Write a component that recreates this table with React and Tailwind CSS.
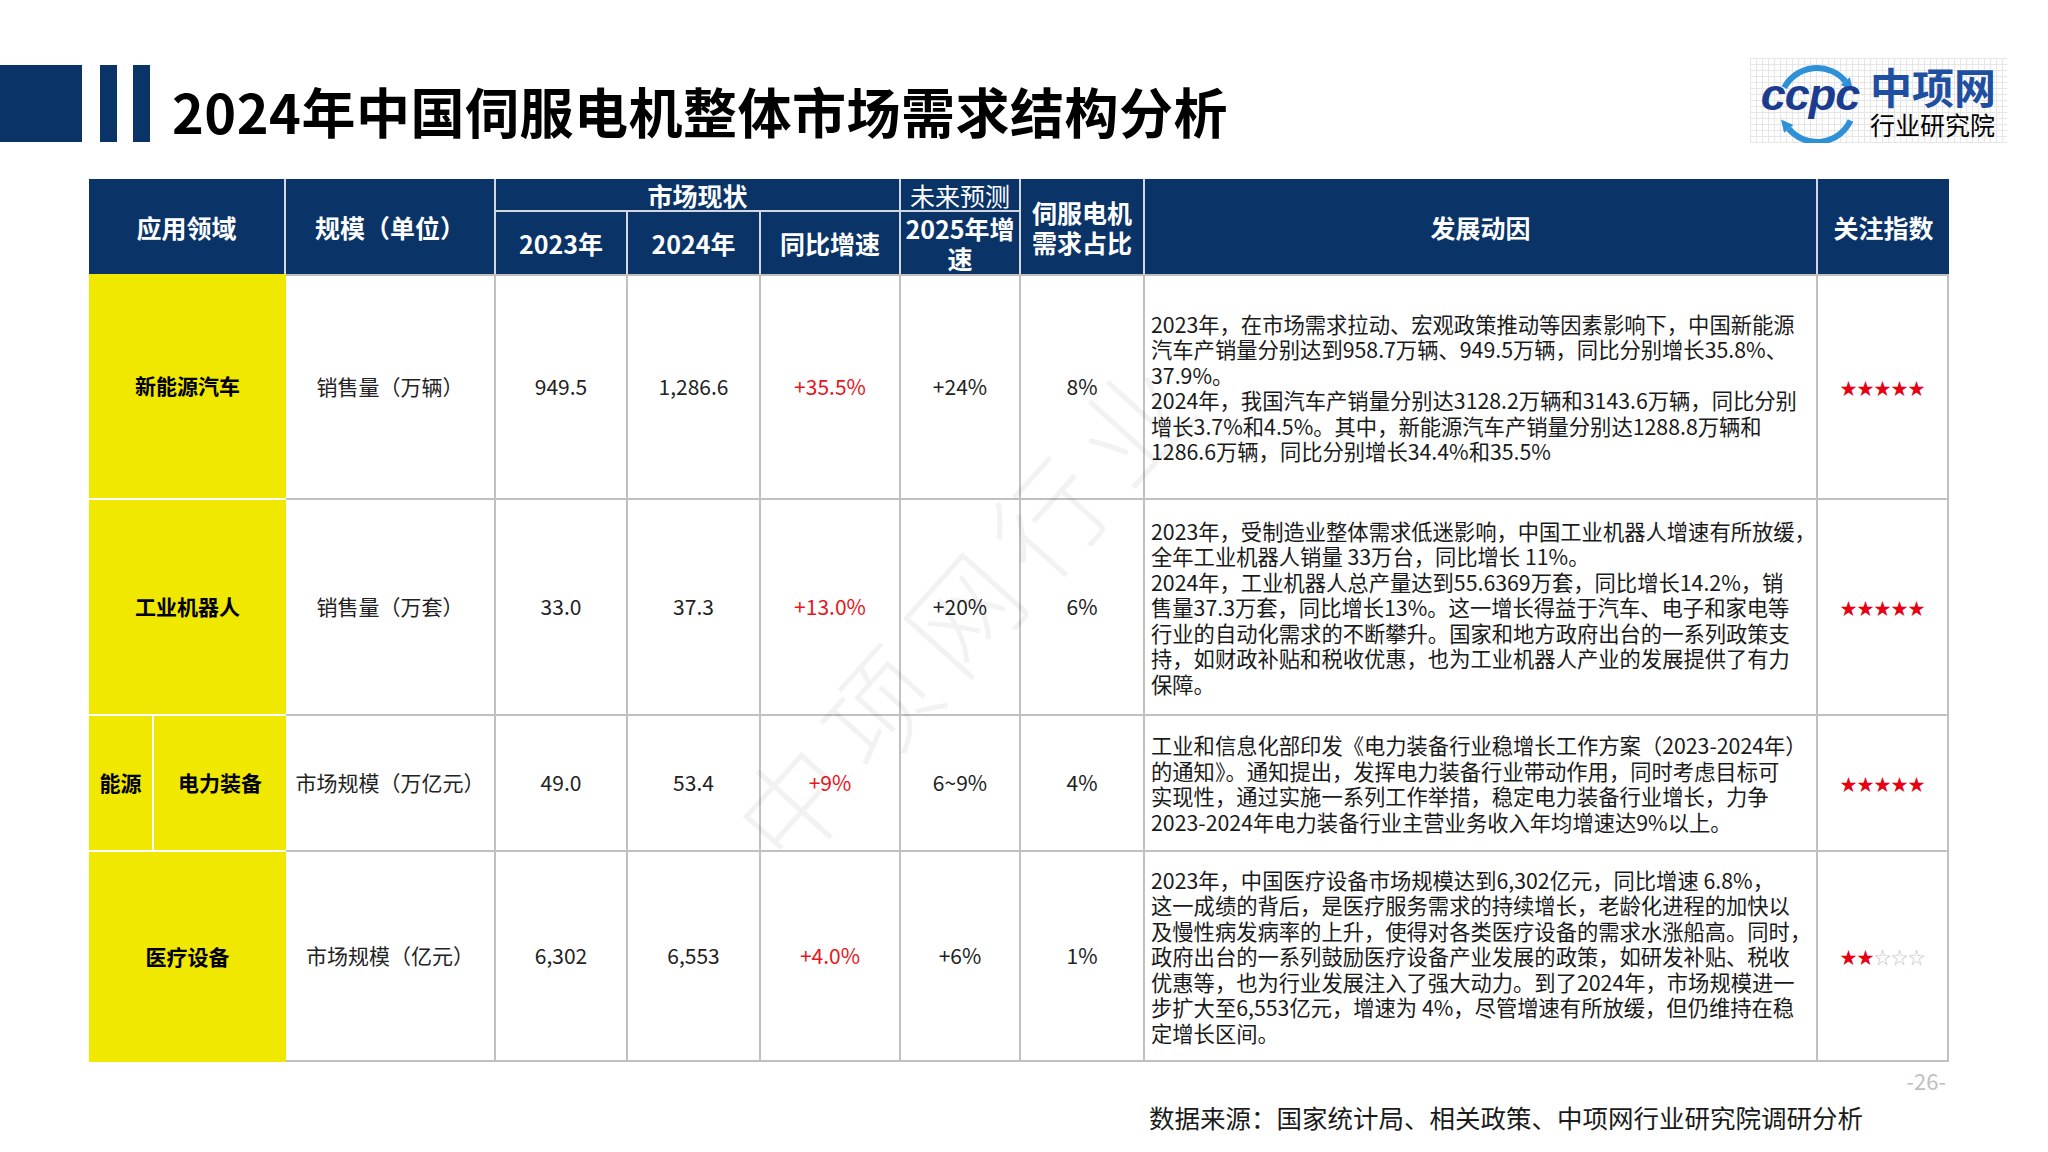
import React from 'react';

function Logo() {
  return (
    <div className="relative ml-auto mr-[41px] mt-[58px] flex h-[85px] w-[257px] bg-[image:linear-gradient(to_right,#e6e6e6_1px,transparent_1px),linear-gradient(to_bottom,#e6e6e6_1px,transparent_1px)] bg-[size:6px_6px]">
      <div className="relative flex h-full w-[120px] items-center justify-center pb-[12px]">
        <svg className="absolute left-0 top-0" width="120" height="85" viewBox="0 0 120 85">
          <path d="M 34.3 29.6 A 37 37 0 0 1 95.3 23.2" fill="none" stroke="#2e90d6" strokeWidth="6" />
          <polygon points="103,32.4 99.9,19.3 90.7,27.1" fill="#2e90d6" />
          <path d="M 100.5 62.6 A 37 37 0 0 1 38.7 70.8" fill="none" stroke="#2e90d6" strokeWidth="6" />
          <polygon points="31,61.6 34.1,74.7 43.3,66.9" fill="#2e90d6" />
        </svg>
        <span className="relative font-['Liberation_Sans',sans-serif] text-[45px] font-bold italic leading-none tracking-[-1px] text-[#1c3d8f]">
          ccpc
        </span>
      </div>
      <div className="flex flex-col pt-[7px]">
        <span className="text-[42px] font-bold leading-[42px] text-[#1f4fa0]">中项网</span>
        <span className="mt-[5px] text-[25px] leading-[25px] text-black">行业研究院</span>
      </div>
    </div>
  );
}

function H({ children, className = '' }) {
  return (
    <div
      className={`flex items-center justify-center text-center bg-[#0a3468] text-white font-bold text-[25px] leading-[30px] border-[#d3d8e0] ${className}`}
    >
      {children}
    </div>
  );
}

function C({ children, className = '' }) {
  return (
    <div
      className={`flex items-center justify-center text-center bg-white border-r-2 border-b-2 border-[#c0c0c0] text-[21px] text-[#222] ${className}`}
    >
      {children}
    </div>
  );
}

function T({ lines, className = '' }) {
  return (
    <div
      className={`flex flex-col justify-center items-start bg-white border-r-2 border-b-2 border-[#c0c0c0] pl-[6px] text-[21.3px] leading-[25.5px] text-[#1a1a1a] ${className}`}
    >
      {lines.map((l, i) => (
        <div key={i} className="whitespace-nowrap">
          {l}
        </div>
      ))}
    </div>
  );
}

function Stars({ n, className = '' }) {
  const full = '★★★★★'.slice(0, n);
  const empty = '☆☆☆☆☆'.slice(0, 5 - n);
  return (
    <div
      className={`flex items-center justify-center bg-white border-r-2 border-b-2 border-[#c0c0c0] text-[17px] leading-none ${className}`}
    >
      <span className="text-[#e60012]">{full}</span>
      <span className="text-[#c4c4c4]">{empty}</span>
    </div>
  );
}

function Y({ children, className = '' }) {
  return (
    <div
      className={`flex items-center justify-center bg-[#f0e800] border-white text-[21px] font-bold text-black ${className}`}
    >
      {children}
    </div>
  );
}

const rows = [
  {
    unit: '销售量（万辆）',
    a: '949.5',
    b: '1,286.6',
    g: '+35.5%',
    f: '+24%',
    s: '8%',
    n: 5,
    lines: [
      '2023年，在市场需求拉动、宏观政策推动等因素影响下，中国新能源',
      '汽车产销量分别达到958.7万辆、949.5万辆，同比分别增长35.8%、',
      '37.9%。',
      '2024年，我国汽车产销量分别达3128.2万辆和3143.6万辆，同比分别',
      '增长3.7%和4.5%。其中，新能源汽车产销量分别达1288.8万辆和',
      '1286.6万辆，同比分别增长34.4%和35.5%',
    ],
  },
  {
    unit: '销售量（万套）',
    a: '33.0',
    b: '37.3',
    g: '+13.0%',
    f: '+20%',
    s: '6%',
    n: 5,
    lines: [
      '2023年，受制造业整体需求低迷影响，中国工业机器人增速有所放缓，',
      '全年工业机器人销量 33万台，同比增长 11%。',
      '2024年，工业机器人总产量达到55.6369万套，同比增长14.2%，销',
      '售量37.3万套，同比增长13%。这一增长得益于汽车、电子和家电等',
      '行业的自动化需求的不断攀升。国家和地方政府出台的一系列政策支',
      '持，如财政补贴和税收优惠，也为工业机器人产业的发展提供了有力',
      '保障。',
    ],
  },
  {
    unit: '市场规模（万亿元）',
    a: '49.0',
    b: '53.4',
    g: '+9%',
    f: '6~9%',
    s: '4%',
    n: 5,
    lines: [
      '工业和信息化部印发《电力装备行业稳增长工作方案（2023-2024年）',
      '的通知》。通知提出，发挥电力装备行业带动作用，同时考虑目标可',
      '实现性，通过实施一系列工作举措，稳定电力装备行业增长，力争',
      '2023-2024年电力装备行业主营业务收入年均增速达9%以上。',
    ],
  },
  {
    unit: '市场规模（亿元）',
    a: '6,302',
    b: '6,553',
    g: '+4.0%',
    f: '+6%',
    s: '1%',
    n: 2,
    lines: [
      '2023年，中国医疗设备市场规模达到6,302亿元，同比增速 6.8%，',
      '这一成绩的背后，是医疗服务需求的持续增长，老龄化进程的加快以',
      '及慢性病发病率的上升，使得对各类医疗设备的需求水涨船高。同时，',
      '政府出台的一系列鼓励医疗设备产业发展的政策，如研发补贴、税收',
      '优惠等，也为行业发展注入了强大动力。到了2024年，市场规模进一',
      '步扩大至6,553亿元，增速为 4%，尽管增速有所放缓，但仍维持在稳',
      '定增长区间。',
    ],
  },
];

function BodyRow({ r, first }) {
  const t = first ? 'border-t-2' : '';
  return (
    <>
      <C className={`text-[20px] ${t}`}>{r.unit}</C>
      <C className={t}>{r.a}</C>
      <C className={t}>{r.b}</C>
      <C className={`text-[#e5161d] ${t}`}>{r.g}</C>
      <C className={t}>{r.f}</C>
      <C className={t}>{r.s}</C>
      <T lines={r.lines} className={t} />
      <Stars n={r.n} className={t} />
    </>
  );
}

const marks = [
  { ch: '中', x: 790, y: 800 },
  { ch: '项', x: 875, y: 705 },
  { ch: '网', x: 960, y: 610 },
  { ch: '行', x: 1045, y: 515 },
  { ch: '业', x: 1130, y: 420 },
];

export default function App() {
  return (
    <div className="relative h-[1152px] w-[2048px] overflow-hidden bg-white font-['Noto_Sans_CJK_SC',sans-serif]">
      {/* Title bar */}
      <div className="flex h-[179px] items-start">
        <div className="mt-[65px] h-[77px] w-[82px] bg-[#0a3468]" />
        <div className="ml-[18px] mt-[65px] h-[77px] w-[17px] bg-[#0a3468]" />
        <div className="ml-[16px] mt-[65px] h-[77px] w-[17px] bg-[#0a3468]" />
        <h1 className="ml-[22px] mt-[84px] whitespace-nowrap text-[54px] font-bold leading-none tracking-[0.5px] text-black">
          2024年中国伺服电机整体市场需求结构分析
        </h1>
        <Logo />
      </div>

      {/* Table */}
      <div className="ml-[89px] grid w-[1860px] grid-cols-[197px_210px_132px_133px_140px_120px_124px_673px_131px] grid-rows-[33px_62px_226px_216px_136px_210px]">
        <H className="row-span-2 border-r-2">应用领域</H>
        <H className="row-span-2 border-r-2">规模（单位）</H>
        <H className="col-span-3 border-r-2 border-b-2">市场现状</H>
        <H className="border-r-2 border-b-2 font-normal">未来预测</H>
        <H className="row-span-2 border-r-2">
          伺服电机
          <br />
          需求占比
        </H>
        <H className="row-span-2 border-r-2">发展动因</H>
        <H className="row-span-2">关注指数</H>
        <H className="border-r-2">2023年</H>
        <H className="border-r-2">2024年</H>
        <H className="border-r-2">同比增速</H>
        <H className="border-r-2">
          2025年增
          <br />
          速
        </H>

        <Y className="border-b-2">新能源汽车</Y>
        <BodyRow r={rows[0]} first />

        <Y className="border-b-2">工业机器人</Y>
        <BodyRow r={rows[1]} />

        <div className="flex border-b-2 border-white bg-[#f0e800] text-[21px] font-bold text-black">
          <div className="flex w-[65px] items-center justify-center border-r-2 border-white">能源</div>
          <div className="flex flex-1 items-center justify-center">电力装备</div>
        </div>
        <BodyRow r={rows[2]} />

        <Y>医疗设备</Y>
        <BodyRow r={rows[3]} />
      </div>

      {/* Footer */}
      <div className="mt-[7px] flex justify-end pr-[102px]">
        <span className="text-[22px] leading-[22px] text-[#c0c0c0]">-26-</span>
      </div>
      <div className="mt-[13px] pl-[1149px]">
        <span className="whitespace-nowrap text-[25.5px] leading-[26px] text-[#1a1a1a]">
          数据来源：国家统计局、相关政策、中项网行业研究院调研分析
        </span>
      </div>

      {/* Watermark */}
      {marks.map((m) => (
        <div
          key={m.ch}
          className="pointer-events-none absolute -translate-x-1/2 -translate-y-1/2 rotate-[-48deg] text-[110px] font-light leading-none text-black/[0.05]"
          style={{ left: m.x, top: m.y }}
        >
          {m.ch}
        </div>
      ))}
    </div>
  );
}
